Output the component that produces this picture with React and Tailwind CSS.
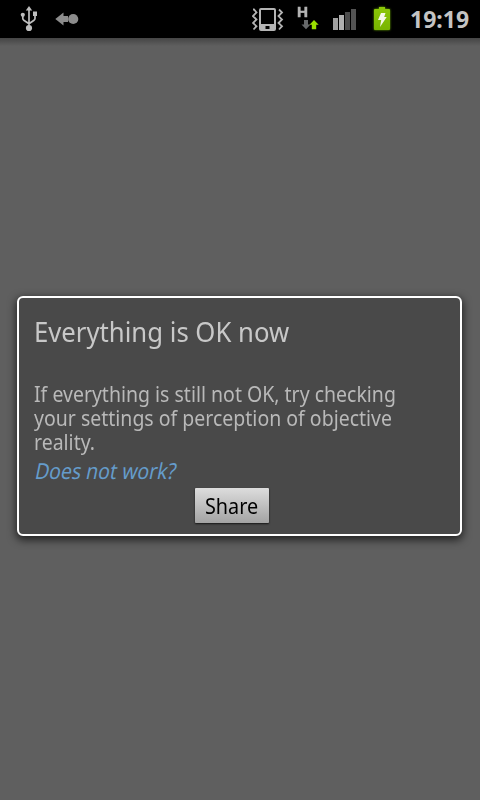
import React from 'react';

function UsbIcon() {
  return (
    <svg width="18" height="26" viewBox="0 0 18 26" fill="none" stroke="#bdbdbd" strokeWidth="1.7">
      <path d="M9 4v18M2.8 10v2.6q0 1 1 1.6l5.2 3.6M15 10v2.6q0 1-1 1.6l-5 3.6" />
      <path d="M9 0L12.2 4.5H5.8z" fill="#bdbdbd" stroke="none" />
      <circle cx="9" cy="22" r="3.1" fill="#bdbdbd" stroke="none" />
      <circle cx="2.8" cy="8.8" r="2.1" fill="#bdbdbd" stroke="none" />
      <path d="M13 5.5h4v4.5h-4z" fill="#bdbdbd" stroke="none" />
    </svg>
  );
}

function ArrowDotIcon() {
  return (
    <svg width="24" height="14" viewBox="0 0 24 14" fill="#8c8c8c">
      <path d="M0.3 7L8.5 0.4V4H13V10H8.5V13.6z" />
      <circle cx="18.2" cy="7" r="5.1" />
    </svg>
  );
}

function VibrateIcon() {
  return (
    <svg width="32" height="24" viewBox="0 0 32 24" fill="none" stroke="#b4b4b4">
      <path fillRule="evenodd" d="M9 0h13a2 2 0 0 1 2 2v19a2 2 0 0 1-2 2h-13a2 2 0 0 1-2-2v-19a2 2 0 0 1 2-2zM9 2v14h13V2zM13.5 18h4v3h-4z" fill="#b4b4b4" stroke="none" />
      <path d="M1 1.5h1l2.5 3-3.5 3.6 3.5 3.4L1 15l3.5 3.2L1.5 21.5M27 1.5l3 3-3.5 3.6 3.5 3.4-3.5 3.5 3.5 3.2-3 3.3" strokeWidth="1.8" />
    </svg>
  );
}

function DataIcon() {
  return (
    <div className="w-[24px]">
      <div className="origin-left scale-x-[1.05] font-['Liberation_Sans',sans-serif] text-[14.5px] font-bold leading-[13px] text-[#b4b4b4] [-webkit-text-stroke:0.5px_#b4b4b4]">H</div>
      <svg className="ml-[4px] mt-px" width="18" height="10" viewBox="0 0 18 10">
        <path d="M3 0h4v4.5h2.5L5 9.3 0.5 4.5H3z" fill="#66686a" />
        <path d="M13 0l4.7 4.7h-2.5v4.6h-4.4v-4.6H8.5z" fill="#9be000" />
      </svg>
    </div>
  );
}

function SignalIcon() {
  return (
    <svg width="24" height="22" viewBox="0 0 24 22">
      <path d="M0 10h5v12h-5z" fill="#a0a0a0" />
      <path d="M6 7h5v15h-5z" fill="#b0b0b0" />
      <path d="M12 4h5v18h-5z" fill="#4c4c4c" />
      <path d="M18 1h5v21h-5z" fill="#535353" />
    </svg>
  );
}

function BatteryIcon() {
  return (
    <svg className="overflow-visible drop-shadow-[0_0_1px_#69a800]" width="16" height="23" viewBox="0 0 16 23">
      <defs>
        <linearGradient id="battery" x1="0" y1="0" x2="0" y2="1">
          <stop offset="0" stopColor="#8cc808" />
          <stop offset="1" stopColor="#78b400" />
        </linearGradient>
      </defs>
      <path d="M5 0h6v2h4q1 0 1 1v19q0 1-1 1h-14q-1 0-1-1v-19q0-1 1-1h4z" fill="url(#battery)" />
      <path d="M7 6h4.5l-1.3 4h2.5L6 20l1.2-7H4z" fill="#f4f8e8" />
    </svg>
  );
}

function StatusBar() {
  return (
    <div className="flex h-[38px] items-start bg-black">
      <div className="ml-5 mt-[6px]"><UsbIcon /></div>
      <div className="ml-[17px] mt-[12px]"><ArrowDotIcon /></div>
      <div className="ml-[173px] mt-[8px]"><VibrateIcon /></div>
      <div className="ml-[13px] mt-[6px]"><DataIcon /></div>
      <div className="ml-[12px] mt-[8px]"><SignalIcon /></div>
      <div className="ml-[17px] mt-[7px]"><BatteryIcon /></div>
      <div className="ml-[20px] w-[60px] whitespace-nowrap text-[23px] font-bold leading-[38px] text-[#c4c4c4]">19:19</div>
    </div>
  );
}

function App() {
  return (
    <div className="h-[800px] w-[480px] overflow-hidden bg-[#5f5f5f] font-['Noto_Sans',sans-serif]">
      <StatusBar />
      <div className="h-2 bg-linear-to-b from-[#454545] to-[#5f5f5f]" />

      {/* Dialog */}
      <div className="ml-[17px] mt-[250px] h-[240px] w-[445px] rounded-[6px] border-2 border-white bg-[#494949] px-[15px] pt-[15px] shadow-[0_3px_9px_1px_rgba(0,0,0,0.65)]">
        <h1 className="origin-left scale-x-[0.918] whitespace-nowrap text-[28px] leading-[36px] text-[#c8c8c8]">Everything is OK now</h1>
        <p className="mt-[32px] origin-left scale-x-[0.886] whitespace-nowrap text-[22px] leading-6 text-[#b9b9b9]">
          If everything is still not OK, try checking<br />
          your settings of perception of objective<br />
          reality.
        </p>
        <a className="mt-[2px] block origin-left scale-x-[0.882] -skew-x-[13deg] whitespace-nowrap pl-[2px] text-[22px] leading-[30px] text-[#659ccb]">Does not work?</a>
        <button className="ml-[161px] mt-[3px] flex h-[35px] w-[74px] items-center justify-center rounded-[1px] bg-linear-to-b from-[#dddddd] to-[#a3a3a3] text-[22px] text-black shadow-[0_1px_2px_rgba(0,0,0,0.7)]">
          <span className="scale-x-[0.9]">Share</span>
        </button>
      </div>
    </div>
  );
}

export default App;
